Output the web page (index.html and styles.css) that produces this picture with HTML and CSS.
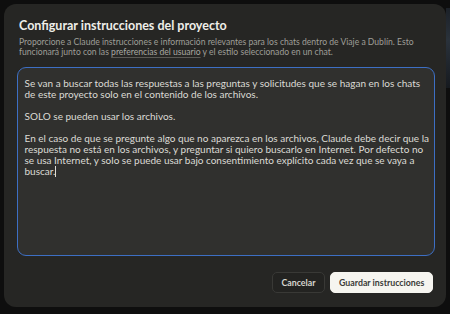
FILE: index.html
```html
<!DOCTYPE html>
<html lang="es">
<head>
    <meta charset="UTF-8">
    <title>Configurar instrucciones del proyecto</title>
    <link rel="stylesheet" href="styles.css">
</head>
<body>

<div class="backdrop">
    <div class="dialog">
        <h2 class="dialog-title">Configurar instrucciones del proyecto</h2>
        <p class="dialog-desc">
            Proporcione a Claude instrucciones e información relevantes para los chats dentro de Viaje a Dublín. Esto
            funcionará junto con las <a href="#">preferencias del usuario</a> y el estilo seleccionado en un chat.
        </p>

        <div class="editor">
            <p>Se van a buscar todas las respuestas a las preguntas y solicitudes que se hagan en los chats de este proyecto solo en el contenido de los archivos.</p>
            <p>SOLO se pueden usar los archivos.</p>
            <p>En el caso de que se pregunte algo que no aparezca en los archivos, Claude debe decir que la respuesta no está en los archivos, y preguntar si quiero buscarlo en Internet. Por defecto no se usa Internet, y solo se puede usar bajo consentimiento explícito cada vez que se vaya a buscar.<span class="caret"></span></p>
        </div>

        <div class="actions">
            <button class="btn btn-ghost">Cancelar</button>
            <button class="btn btn-primary">Guardar instrucciones</button>
        </div>
    </div>
</div>

</body>
</html>
```

FILE: styles.css
```css
html, body {
    margin: 0;
    padding: 0;
}

body {
    font-family: Lato, "Noto Sans", sans-serif;
    background: #0e0e0e;
    width: 450px;
    height: 314px;
    overflow: hidden;
}

/* dimmed app behind the dialog, only a sliver shows on the right */
.backdrop {
    padding: 4px 4px 0 4px;
    background: linear-gradient(#1c2128, #2a323b 40%, #161a1f) no-repeat right 8px / 4px 80px;
}

.dialog {
    background: #262624;
    border-radius: 12px;
    height: 303px;
    box-sizing: border-box;
    padding: 14px 11px 14px 13px;
    display: flex;
    flex-direction: column;
}

.dialog-title {
    margin: 0 0 0 2px;
    font-size: 12.5px;
    line-height: 16px;
    font-weight: 700;
    color: #efeee9;
}

.dialog-desc {
    margin: 3px 0 0 2px;
    font-size: 8.6px;
    line-height: 10.4px;
    color: #9f9e98;
}

.dialog-desc a {
    color: #a9a8a2;
    text-decoration: underline;
    text-decoration-color: #5a5955;
    text-underline-offset: 2px;
}

.editor {
    margin-top: 9.5px;
    width: 418px;
    height: 189px;
    box-sizing: border-box;
    background: #30302e;
    border: 1.5px solid #3d6fc4;
    border-radius: 9px;
    padding: 9.5px 1.5px 6px 6.5px;
    color: #dcdbd5;
    font-size: 10px;
    line-height: 11px;
}

.editor p {
    margin: 0 0 11px 0;
}

.caret {
    display: inline-block;
    width: 1px;
    height: 11px;
    background: #dcdbd5;
    vertical-align: -2px;
}

.actions {
    margin-top: auto;
    display: flex;
    justify-content: flex-end;
    gap: 5px;
    padding-right: 2px;
}

.btn {
    font-family: inherit;
    font-size: 8.8px;
    font-weight: 700;
    height: 21px;
    border-radius: 5px;
    padding: 0 8px;
    white-space: nowrap;
    cursor: pointer;
}

.btn-ghost {
    background: #232321;
    color: #d6d5cf;
    border: 1px solid #393936;
    width: 53px;
}

.btn-primary {
    background: #f6f5f0;
    color: #3a3a38;
    border: 1px solid #f6f5f0;
    width: 103px;
}
```
